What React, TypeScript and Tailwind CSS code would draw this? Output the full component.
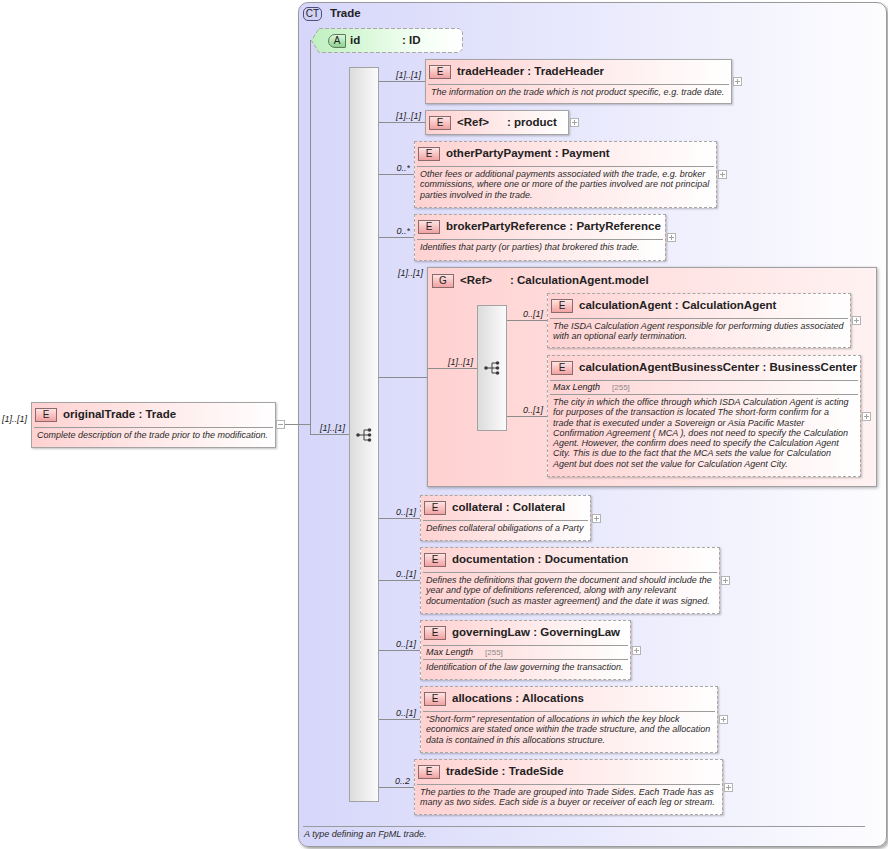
import React from "react";

// small +/- expander box at the right edge of a node
const Plus = ({ minus = false, className = "" }: { minus?: boolean; className?: string }) => (
  <svg width="9" height="9" viewBox="0 0 9 9" className={`shrink-0 ${className}`}>
    <rect x="0.5" y="0.5" width="8" height="8" fill="#fff" stroke="#b4b4b4" />
    <path d="M2 4.5h5" stroke="#a4a4a4" />
    {!minus && <path d="M4.5 2v5" stroke="#a4a4a4" />}
  </svg>
);

const Badge = ({ t }: { t: string }) => (
  <span className="flex h-[14px] w-[22px] shrink-0 items-center justify-center border border-[#8a6a6a] bg-linear-to-b from-[#fde4e4] to-[#f0a2a2] text-[10px] font-normal leading-none text-[#222]">
    {t}
  </span>
);

const SeqIcon = () => (
  <svg width="16" height="14" viewBox="0 0 16 14">
    <path d="M2 7h6M8 2v10M8 2h5M8 7h5M8 12h5" stroke="#3c3c3c" strokeWidth="1" fill="none" />
    <circle cx="2" cy="7" r="1.8" fill="#3c3c3c" />
    <circle cx="13.5" cy="2" r="1.8" fill="#3c3c3c" />
    <circle cx="13.5" cy="7" r="1.8" fill="#3c3c3c" />
    <circle cx="13.5" cy="12" r="1.8" fill="#3c3c3c" />
  </svg>
);

const SeqBar = ({ className }: { className: string }) => (
  <div
    className={`flex w-[30px] shrink-0 items-center justify-center border border-[#a2a2a2] bg-linear-to-r from-[#dcdcdc] to-[#fbfbfb] ${className}`}
  >
    <SeqIcon />
  </div>
);

// connector line from a sequence bar to a node, with its cardinality label
const Conn = ({ w, label, top = false }: { w: string; label: string; top?: boolean }) => (
  <div className={`flex shrink-0 flex-col self-stretch ${w}`}>
    <div
      className={`flex flex-1 justify-end border-b border-[#8c8c8c] pr-[4px] ${top ? "items-start pt-[1px]" : "items-end"}`}
    >
      <span className="pb-[1px] text-[9px] italic leading-[10px] text-[#222]">{label}</span>
    </div>
    <div className="flex-1" />
  </div>
);

type BoxProps = {
  w: string;
  h: string;
  name: string;
  type: string;
  isRef?: boolean;
  dashed?: boolean;
  facet?: boolean;
  desc?: string[];
};

const Box = ({ w, h, name, type, isRef, dashed, facet, desc }: BoxProps) => (
  <div
    className={`flex shrink-0 flex-col border bg-linear-to-r from-[#ffd1d1] via-[#ffe9e9] to-white shadow-[1px_1px_2px_rgba(0,0,0,0.25)] ${
      dashed ? "border-dashed border-[#a8a8a8]" : "border-[#a4a4a4]"
    } ${w} ${h}`}
  >
    <div className="flex h-[24px] shrink-0 items-center gap-[6px] pl-[3px] text-[11.5px] font-bold text-[#222]">
      <Badge t="E" />
      {isRef ? (
        <>
          <span className="w-[44px]">&lt;Ref&gt;</span>
          <span>: {type}</span>
        </>
      ) : (
        <span className="whitespace-pre">
          {name} : {type}
        </span>
      )}
    </div>
    {desc && <div className="mx-[2px] h-px shrink-0 bg-[#9c9c9c]" />}
    {facet && (
      <>
        <div className="flex h-[13px] shrink-0 items-center pl-[5px]">
          <span className="text-[9px] italic leading-none text-[#222]">Max Length</span>
          <span className="ml-[12px] text-[8px] leading-none text-[#8a8a8a]">[255]</span>
        </div>
        <div className="mx-[2px] h-px shrink-0 bg-[#9c9c9c]" />
      </>
    )}
    {desc && (
      <div className="whitespace-nowrap pl-[5px] pt-[2px] text-[9px] italic leading-[10.3px] text-[#2a2a2a]">
        {desc.map((l, i) => (
          <div key={i}>{l}</div>
        ))}
      </div>
    )}
  </div>
);

const Row = ({
  conn,
  label,
  children,
  plus = true,
  top = false,
  className = "",
}: {
  conn: string;
  label: string;
  children: React.ReactNode;
  plus?: boolean;
  top?: boolean;
  className?: string;
}) => (
  <div className={`flex items-center ${className}`}>
    <Conn w={conn} label={label} top={top} />
    {children}
    {plus && <Plus className="ml-px" />}
  </div>
);

const Attribute = () => (
  <div className="relative ml-[12px] mt-[7px] h-[25px] w-[152px]">
    <svg className="absolute inset-0" width="152" height="25" viewBox="0 0 152 25">
      <defs>
        <linearGradient id="attrFill" x1="0" x2="1" y1="0" y2="0">
          <stop offset="0" stopColor="#bff0bf" />
          <stop offset="0.7" stopColor="#f4fff4" />
          <stop offset="1" stopColor="#ffffff" />
        </linearGradient>
      </defs>
      <polygon
        points="8,0.5 148,0.5 151.5,4 151.5,21 148,24.5 8,24.5 0.5,12.5"
        fill="url(#attrFill)"
        stroke="#a8a8a8"
        strokeDasharray="4 2"
      />
    </svg>
    <div className="relative flex h-full items-center gap-[4px] pl-[17px] text-[11.5px] font-bold text-[#222]">
      <span className="flex h-[14px] w-[18px] items-center justify-center rounded-l-[7px] rounded-r-[1px] border border-[#5c7a5c] bg-linear-to-b from-[#dcf7dc] to-[#8dd28d] text-[10px] font-normal leading-none">
        A
      </span>
      <span className="w-[48px]">id</span>
      <span>: ID</span>
    </div>
  </div>
);

export default function App() {
  return (
    <div className="flex h-[849px] w-[888px] items-center bg-white text-[#222] [font-family:'Liberation_Sans',Arial,sans-serif]">
      {/* originalTrade element */}
      <div className="flex items-center">
        <span className="mt-[12px] w-[31px] self-start pl-[2px] text-[9px] italic leading-[10px]">[1]..[1]</span>
        <Box
          w="w-[245px]"
          h="h-[46px]"
          name="originalTrade"
          type="Trade"
          desc={["Complete description of the trade prior to the modification."]}
        />
        <Plus minus />
        <div className="relative z-10 -mr-[13px] h-px w-[26px] bg-[#8c8c8c]" />
      </div>

      {/* complex type Trade */}
      <div className="relative flex h-[845px] w-[589px] shrink-0 flex-col rounded-[10px] border border-[#9a9a9a] bg-linear-to-r from-[#d6d6fa] to-[#fdfdff] shadow-[2px_2px_3px_rgba(0,0,0,0.35)]">
        <div className="absolute left-[11px] top-[37px] h-[394px] w-px bg-[#8c8c8c]" />

        <div className="flex items-center gap-[8px] pl-[4px] pt-[4px]">
          <span className="flex h-[14px] w-[19px] items-center justify-center rounded-[5px] border border-[#4e4e7e] bg-[#d2d2f6] text-[10px] leading-none">
            CT
          </span>
          <span className="text-[11.5px] font-bold leading-none">Trade</span>
        </div>

        <Attribute />

        <div className="mt-[6px] flex items-start pl-[11px]">
          <div className="mt-[8px] flex h-[735px] w-[39px] shrink-0 flex-col">
            <div className="flex flex-1 items-end justify-end border-b border-[#8c8c8c] pr-[4px]">
              <span className="pb-[1px] text-[9px] italic leading-[10px]">[1]..[1]</span>
            </div>
            <div className="flex-1" />
          </div>
          <SeqBar className="mt-[8px] h-[735px]" />

          <div className="flex flex-col gap-[6px]">
            <Row conn="w-[46px]" label="[1]..[1]">
              <Box
                w="w-[307px]"
                h="h-[45px]"
                name="tradeHeader"
                type="TradeHeader"
                desc={["The information on the trade which is not product specific, e.g. trade date."]}
              />
            </Row>
            <Row conn="w-[46px]" label="[1]..[1]">
              <Box w="w-[144px]" h="h-[25px]" name="" type="product" isRef />
            </Row>
            <Row conn="w-[35px]" label="0..*">
              <Box
                w="w-[303px]"
                h="h-[67px]"
                dashed
                name="otherPartyPayment"
                type="Payment"
                desc={[
                  "Other fees or additional payments associated with the trade, e.g. broker",
                  "commissions, where one or more of the parties involved are not principal",
                  "parties involved in the trade.",
                ]}
              />
            </Row>
            <Row conn="w-[35px]" label="0..*">
              <Box
                w="w-[252px]"
                h="h-[47px]"
                dashed
                name="brokerPartyReference"
                type="PartyReference"
                desc={["Identifies that party (or parties) that brokered this trade."]}
              />
            </Row>

            {/* group CalculationAgent.model */}
            <Row conn="w-[48px]" label="[1]..[1]" plus={false} top className="mb-[2px]">
              <div className="flex h-[220px] w-[450px] shrink-0 flex-col border border-[#a0a0a0] bg-linear-to-r from-[#ffd1d1] to-[#fff2f2] shadow-[1px_1px_3px_rgba(0,0,0,0.3)]">
                <div className="flex h-[25px] shrink-0 items-center gap-[6px] pl-[4px] text-[11.5px] font-bold">
                  <Badge t="G" />
                  <span className="w-[44px]">&lt;Ref&gt;</span>
                  <span>: CalculationAgent.model</span>
                </div>
                <div className="flex items-start">
                  <div className="mt-[12px] flex h-[126px] w-[49px] shrink-0 flex-col">
                    <div className="flex flex-1 items-end justify-end border-b border-[#8c8c8c] pr-[4px]">
                      <span className="pb-[1px] text-[9px] italic leading-[10px]">[1]..[1]</span>
                    </div>
                    <div className="flex-1" />
                  </div>
                  <SeqBar className="mt-[12px] h-[126px]" />
                  <div className="flex flex-col gap-[7px]">
                    <Row conn="w-[40px]" label="0..[1]">
                      <Box
                        w="w-[304px]"
                        h="h-[55px]"
                        dashed
                        name="calculationAgent"
                        type="CalculationAgent"
                        desc={[
                          "The ISDA Calculation Agent responsible for performing duties associated",
                          "with an optional early termination.",
                        ]}
                      />
                    </Row>
                    <Row conn="w-[40px]" label="0..[1]">
                      <Box
                        w="w-[314px]"
                        h="h-[122px]"
                        dashed
                        facet
                        name="calculationAgentBusinessCenter"
                        type="BusinessCenter"
                        desc={[
                          "The city in which the office through which ISDA Calculation Agent is acting",
                          "for purposes of the transaction is located The short-form confirm for a",
                          "trade that is executed under a Sovereign or Asia Pacific Master",
                          "Confirmation Agreement ( MCA ), does not need to specify the Calculation",
                          "Agent. However, the confirm does need to specify the Calculation Agent",
                          "City. This is due to the fact that the MCA sets the value for Calculation",
                          "Agent but does not set the value for Calculation Agent City.",
                        ]}
                      />
                    </Row>
                  </div>
                </div>
              </div>
            </Row>

            <Row conn="w-[41px]" label="0..[1]">
              <Box
                w="w-[171px]"
                h="h-[46px]"
                dashed
                name="collateral"
                type="Collateral"
                desc={["Defines collateral obiligations of a Party"]}
              />
            </Row>
            <Row conn="w-[41px]" label="0..[1]">
              <Box
                w="w-[300px]"
                h="h-[67px]"
                dashed
                name="documentation"
                type="Documentation"
                desc={[
                  "Defines the definitions that govern the document and should include the",
                  "year and type of definitions referenced, along with any relevant",
                  "documentation (such as master agreement) and the date it was signed.",
                ]}
              />
            </Row>
            <Row conn="w-[41px]" label="0..[1]">
              <Box
                w="w-[211px]"
                h="h-[60px]"
                dashed
                facet
                name="governingLaw"
                type="GoverningLaw"
                desc={["Identification of the law governing the transaction."]}
              />
            </Row>
            <Row conn="w-[41px]" label="0..[1]">
              <Box
                w="w-[298px]"
                h="h-[67px]"
                dashed
                name="allocations"
                type="Allocations"
                desc={[
                  "\u201cShort-form\u201d representation of allocations in which the key block",
                  "economics are stated once within the trade structure, and the allocation",
                  "data is contained in this allocations structure.",
                ]}
              />
            </Row>
            <Row conn="w-[35px]" label="0..2">
              <Box
                w="w-[309px]"
                h="h-[56px]"
                dashed
                name="tradeSide"
                type="TradeSide"
                desc={[
                  "The parties to the Trade are grouped into Trade Sides. Each Trade has as",
                  "many as two sides. Each side is a buyer or receiver of each leg or stream.",
                ]}
              />
            </Row>
          </div>
        </div>

        <div className="mb-[7px] ml-[4px] mr-[21px] mt-auto border-t border-[#9a9a9a] pl-px pt-[2px] text-[9px] italic leading-[10px] text-[#2a2a2a]">
          A type defining an FpML trade.
        </div>
      </div>
    </div>
  );
}
